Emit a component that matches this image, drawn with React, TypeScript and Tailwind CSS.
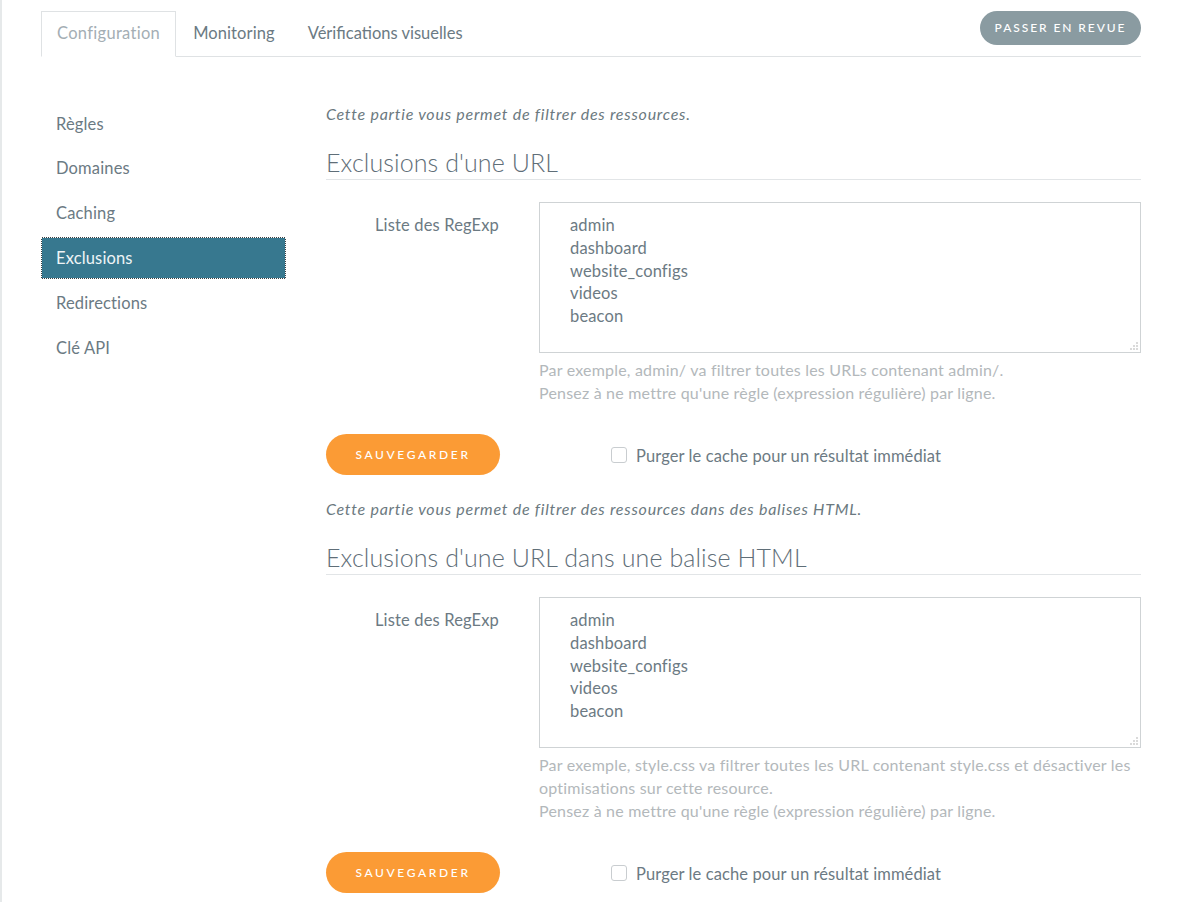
import { useState } from "react";

const sideItems = ["Règles", "Domaines", "Caching", "Exclusions", "Redirections", "Clé API"];

const regexps = "admin\ndashboard\nwebsite_configs\nvideos\nbeacon";

function Grip() {
  // dotted resize handle in the textarea corner
  const dots: [number, number][] = [
    [7, 1], [4, 4], [7, 4], [1, 7], [4, 7], [7, 7],
  ];
  return (
    <svg className="absolute right-[2px] bottom-[2px]" width="9" height="9" viewBox="0 0 9 9">
      {dots.map(([x, y]) => (
        <rect key={`${x}-${y}`} x={x - 0.5} y={y - 0.5} width="1" height="1" fill="#6b6b6b" />
      ))}
    </svg>
  );
}

function Section({ intro, title, help }: { intro: string; title: string; help: string[] }) {
  const [purge, setPurge] = useState(false);
  return (
    <div>
      <p className="text-[16px] leading-[22px] italic tracking-[0.75px] text-[#6b7980]">{intro}</p>
      <h2 className="mt-[22px] pb-[2px] border-b border-[#e2e5e7] text-[25px] leading-[30px] font-light tracking-[0.1px] text-[#5f6e78]">
        {title}
      </h2>
      <div className="mt-[22px] flex gap-[40px]">
        <label className="w-[173px] shrink-0 pt-[12px] text-right text-[16.5px] leading-[22px] tracking-[0.15px] text-[#6c7a83]">
          Liste des RegExp
        </label>
        <div className="w-[602px]">
          <div className="relative">
            <textarea
              readOnly
              defaultValue={regexps}
              className="block w-full h-[151px] resize-none border border-[#cfd3d5] bg-white pl-[30px] pt-[11px] text-[16.5px] leading-[22.75px] tracking-[0.15px] text-[#6c7a83] font-[Lato,sans-serif] outline-none"
            />
            <Grip />
          </div>
          <div className="mt-[5px] text-[16px] leading-[23px] tracking-[0.2px] text-[#b3b8bb]">
            {help.map((h) => (
              <p key={h}>{h}</p>
            ))}
          </div>
        </div>
      </div>
      <div className="mt-[30px] flex items-center">
        <button className="w-[174px] h-[41px] rounded-full bg-[#fb9b35] text-white text-[12px] tracking-[0.22em] font-medium">
          SAUVEGARDER
        </button>
        <label className="ml-[111px] flex items-center gap-[9px] cursor-pointer">
          <span
            onClick={() => setPurge(!purge)}
            className="w-[16px] h-[16px] rounded-[3px] border border-[#c9cdd0] bg-white flex items-center justify-center"
          >
            {purge && <span className="w-[8px] h-[8px] bg-[#6c7a83]" />}
          </span>
          <span className="text-[16.5px] leading-[22px] tracking-[0.1px] text-[#6c7a83] mt-[2px]">
            Purger le cache pour un résultat immédiat
          </span>
        </label>
      </div>
    </div>
  );
}

export default function App() {
  const [active, setActive] = useState("Exclusions");
  return (
    <div className="min-h-screen bg-white border-l-2 border-[#e6e9ea] font-[Lato,sans-serif]">
      <div className="ml-[39px] w-[1100px]">
        {/* Header tabs */}
        <div className="pt-[11px] flex items-start justify-between border-b border-[#dfe2e4]">
          <div className="flex -mb-px">
            <div className="h-[46px] pb-[1px] px-[15px] flex items-center border border-[#dfe2e4] border-b-white bg-white text-[16.5px] tracking-[0.3px] text-[#a4aeb4]">
              Configuration
            </div>
            <div className="h-[46px] pb-[1px] pl-[17px] pr-[16px] flex items-center text-[16.5px] tracking-[0.1px] text-[#6b7a83]">
              Monitoring
            </div>
            <div className="h-[46px] pb-[1px] px-[17px] flex items-center text-[16.5px] tracking-[0px] text-[#6b7a83]">
              Vérifications visuelles
            </div>
          </div>
          <button className="w-[161px] h-[34px] rounded-full bg-[#8a9ba1] text-white text-[12px] tracking-[0.16em] font-medium">
            PASSER EN REVUE
          </button>
        </div>

        <div className="mt-[46px] flex gap-[40px]">
          {/* Sidebar */}
          <div className="w-[245px] shrink-0 flex flex-col gap-[2.8px]">
            {sideItems.map((it) =>
              it === active ? (
                <div key={it} className="bg-[#3a3f42]">
                  <div className="h-[42px] flex items-center pl-[14px] bg-[#37788f] bg-clip-padding border border-dotted border-white text-[16.5px] tracking-[0.15px] text-[#eef4f6]">
                    {it}
                  </div>
                </div>
              ) : (
                <div
                  key={it}
                  onClick={() => setActive(it)}
                  className="h-[42px] flex items-center pl-[15px] text-[16.5px] tracking-[0.15px] text-[#6b7a83] cursor-pointer"
                >
                  {it}
                </div>
              )
            )}
          </div>

          {/* Main */}
          <div className="w-[815px] flex flex-col gap-[23px] pb-[10px]">
            <Section
              intro="Cette partie vous permet de filtrer des ressources."
              title="Exclusions d'une URL"
              help={[
                "Par exemple, admin/ va filtrer toutes les URLs contenant admin/.",
                "Pensez à ne mettre qu'une règle (expression régulière) par ligne.",
              ]}
            />
            <Section
              intro="Cette partie vous permet de filtrer des ressources dans des balises HTML."
              title="Exclusions d'une URL dans une balise HTML"
              help={[
                "Par exemple, style.css va filtrer toutes les URL contenant style.css et désactiver les optimisations sur cette resource.",
                "Pensez à ne mettre qu'une règle (expression régulière) par ligne.",
              ]}
            />
          </div>
        </div>
      </div>
    </div>
  );
}
